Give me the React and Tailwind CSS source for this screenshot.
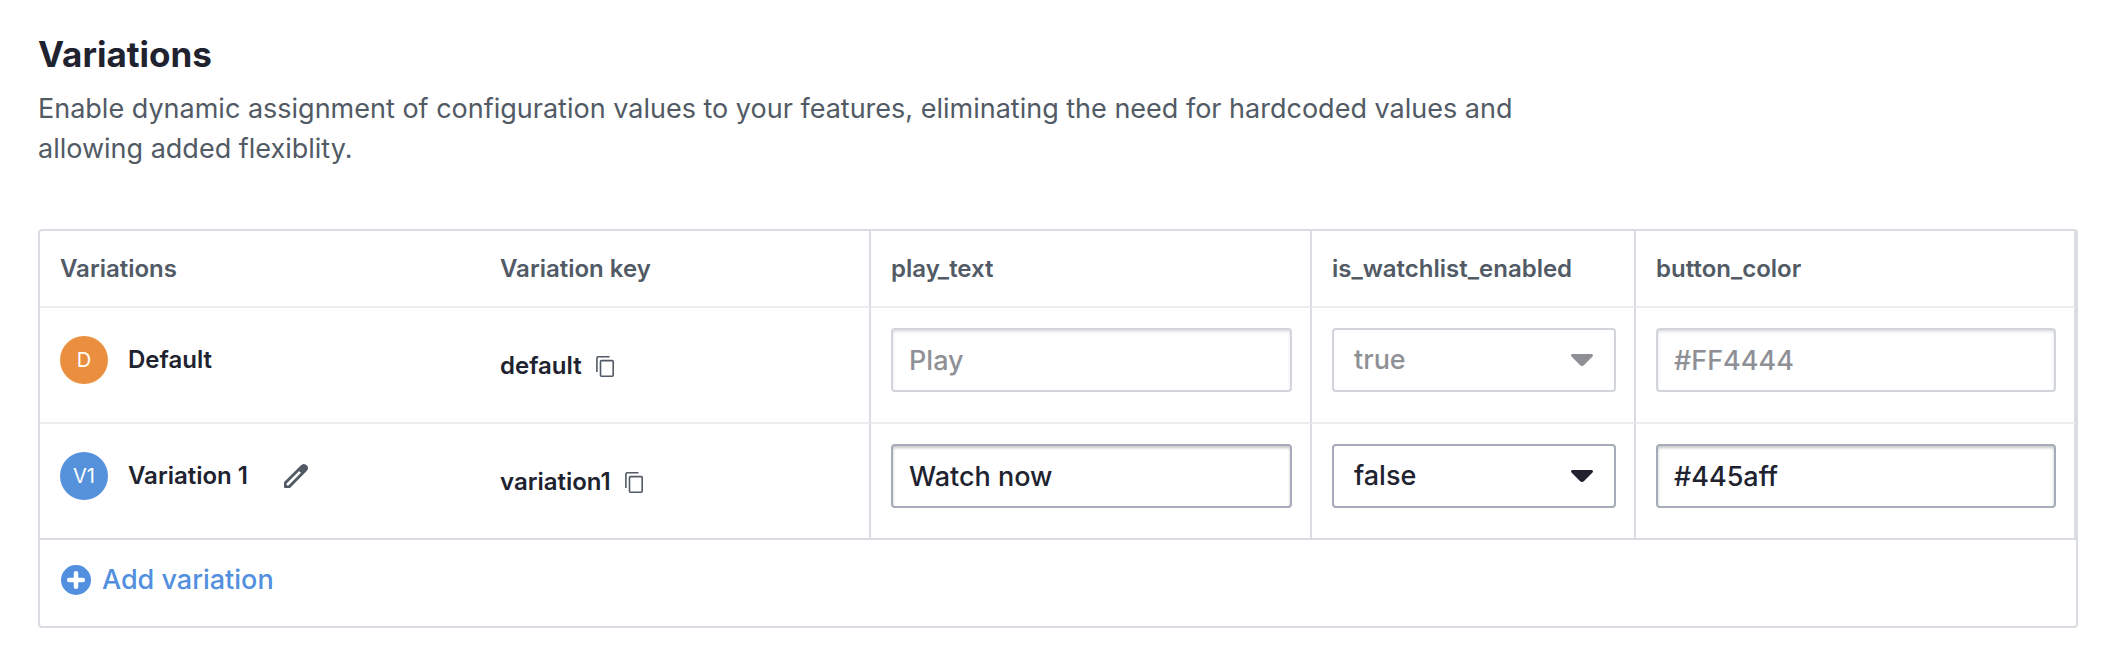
const variations = [
  {
    id: "default",
    badge: "D",
    badgeClass: "bg-[#ea8f3f]",
    name: "Default",
    key: "default",
    playText: "Play",
    watchlist: "true",
    buttonColor: "#FF4444",
    locked: true,
  },
  {
    id: "variation1",
    badge: "V1",
    badgeClass: "bg-[#5692dc]",
    name: "Variation 1",
    key: "variation1",
    playText: "Watch now",
    watchlist: "false",
    buttonColor: "#445aff",
    locked: false,
  },
];

const columns = [
  { label: "Variations", className: "w-[440px] px-5" },
  { label: "Variation key", className: "w-[391px] px-5 border-r-2" },
  { label: "play_text", className: "w-[441px] px-5 border-r-2" },
  { label: "is_watchlist_enabled", className: "w-[324px] px-5 border-r-2" },
  { label: "button_color", className: "px-5 border-r-2" },
];

function PencilIcon() {
  return (
    <svg viewBox="0 0 24 24" className="size-6" fill="currentColor" aria-hidden="true">
      <path
        fillRule="evenodd"
        d="M0 18.900c0-.6.200-1 .6-1.400L17 1.300a4.200 4.200 0 0 1 5.700 0 4.100 4.100 0 0 1 0 5.700L6.500 23.400c-.4.4-.9.6-1.500.6H1a1 1 0 0 1-1-1v-4.100zM2.600 19.600V20.400c0 .6.400 1 1 1h.8L17 8.800c-1-.3-1.600-.9-1.800-1.800L2.600 19.600z"
      />
    </svg>
  );
}

function CopyIcon() {
  return (
    <svg viewBox="0 0 18 21" className="h-[21px] w-[18px]" fill="none" stroke="currentColor" strokeWidth="1.6" aria-hidden="true">
      <path d="M.9 16V2.200A1.400 1.400 0 0 1 2.300.8H13.500" />
      <rect x="4.500" y="4.600" width="12.700" height="15.600" rx="1" />
    </svg>
  );
}

function PlusCircleIcon() {
  return (
    <svg viewBox="0 0 32 32" className="size-8" aria-hidden="true">
      <circle cx="16" cy="16" r="15" fill="currentColor" />
      <path d="M16 9.200v13.600M9.200 16h13.600" stroke="#fff" strokeWidth="4.500" strokeLinecap="round" />
    </svg>
  );
}

function CaretIcon() {
  return (
    <svg viewBox="0 0 22 12" className="pointer-events-none absolute top-[26px] right-[23px] h-3 w-[22px]" fill="currentColor" aria-hidden="true">
      <path d="M1.600 0h18.800c1.400 0 2.100 1.500 1.100 2.500l-8.400 8.600c-1.200 1.200-3 1.200-4.200 0L.5 2.500C-.5 1.500.2 0 1.600 0z" />
    </svg>
  );
}

function TextField({ label, value, disabled }) {
  return (
    <input
      type="text"
      aria-label={label}
      defaultValue={value}
      disabled={disabled}
      className="block h-16 w-full rounded-[4px] border-2 border-[#a5abb8] bg-white px-4 text-[27px] font-medium text-[#20232f] shadow-[inset_0_2px_3px_rgba(0,0,0,0.22)] disabled:opacity-50"
    />
  );
}

function SelectField({ label, value, disabled }) {
  return (
    <div className={disabled ? "relative text-[#20232f] opacity-50" : "relative text-[#20232f]"}>
      <select
        aria-label={label}
        defaultValue={value}
        disabled={disabled}
        className="block h-16 w-full appearance-none rounded-[4px] border-2 border-[#a5abb8] bg-white pr-14 pl-5 text-[27px] font-medium text-[#20232f] disabled:opacity-100"
      >
        <option value="true">true</option>
        <option value="false">false</option>
      </select>
      <CaretIcon />
    </div>
  );
}

function VariationRow({ item, last }) {
  const line = last ? "border-b-2 border-b-[#d9dde2]" : "border-b-2 border-b-[#ecedef]";
  const fieldCell = `${line} border-r-2 border-r-[#d9dde2] pt-5 pr-[18px] pb-[30px] pl-5 align-top`;
  return (
    <tr>
      <td className={`${line} px-5 pt-5 align-top`}>
        <div className="flex h-16 items-center gap-5">
          <span className={`flex size-12 items-center justify-center rounded-full text-[20px] text-white ${item.badgeClass}`}>
            {item.badge}
          </span>
          <span className="text-[24px] leading-8 font-semibold text-[#20232f]">{item.name}</span>
          {!item.locked && (
            <button type="button" aria-label={`Edit ${item.name}`} className="ml-4 text-[#515a65]">
              <PencilIcon />
            </button>
          )}
        </div>
      </td>
      <td className={`${line} border-r-2 border-r-[#d9dde2] px-5 pt-0.5 align-middle`}>
        <div className="flex items-center gap-3.5">
          <span className="text-[24px] leading-8 font-semibold text-[#20232f]">{item.key}</span>
          <button type="button" aria-label={`Copy ${item.key}`} className="text-[#515a65]">
            <CopyIcon />
          </button>
        </div>
      </td>
      <td className={fieldCell}>
        <TextField label={`${item.name} play_text`} value={item.playText} disabled={item.locked} />
      </td>
      <td className={fieldCell}>
        <SelectField label={`${item.name} is_watchlist_enabled`} value={item.watchlist} disabled={item.locked} />
      </td>
      <td className={fieldCell}>
        <TextField label={`${item.name} button_color`} value={item.buttonColor} disabled={item.locked} />
      </td>
    </tr>
  );
}

export default function App() {
  return (
    <main className="min-h-screen bg-white pt-8 pr-[34px] pb-6 pl-[38px] font-['Inter',sans-serif]">
      <h1 className="text-[35px] leading-[44px] font-bold text-[#20232f]">Variations</h1>
      <p className="mt-[13px] max-w-[1500px] text-[27px] leading-10 text-[#515a65]">
        Enable dynamic assignment of configuration values to your features, eliminating the need for hardcoded values
        and allowing added flexiblity.
      </p>

      <section aria-label="Variations" className="mt-[60px] overflow-x-auto rounded-[4px] border-2 border-[#d9dde2]">
        <table className="w-full min-w-[1900px] table-fixed border-separate border-spacing-0 text-left">
          <thead>
            <tr>
              {columns.map((column) => (
                <th
                  key={column.label}
                  scope="col"
                  className={`h-[77px] border-b-2 border-r-[#d9dde2] border-b-[#ecedef] text-[24px] leading-8 font-semibold text-[#515a65] ${column.className}`}
                >
                  {column.label}
                </th>
              ))}
            </tr>
          </thead>
          <tbody>
            {variations.map((item, index) => (
              <VariationRow key={item.id} item={item} last={index === variations.length - 1} />
            ))}
          </tbody>
        </table>
        <div className="px-5 pt-6 pb-[30px]">
          <button type="button" className="flex h-8 items-center gap-[10px] text-[27px] leading-8 font-medium text-[#528fde]">
            <PlusCircleIcon />
            Add variation
          </button>
        </div>
      </section>
    </main>
  );
}
